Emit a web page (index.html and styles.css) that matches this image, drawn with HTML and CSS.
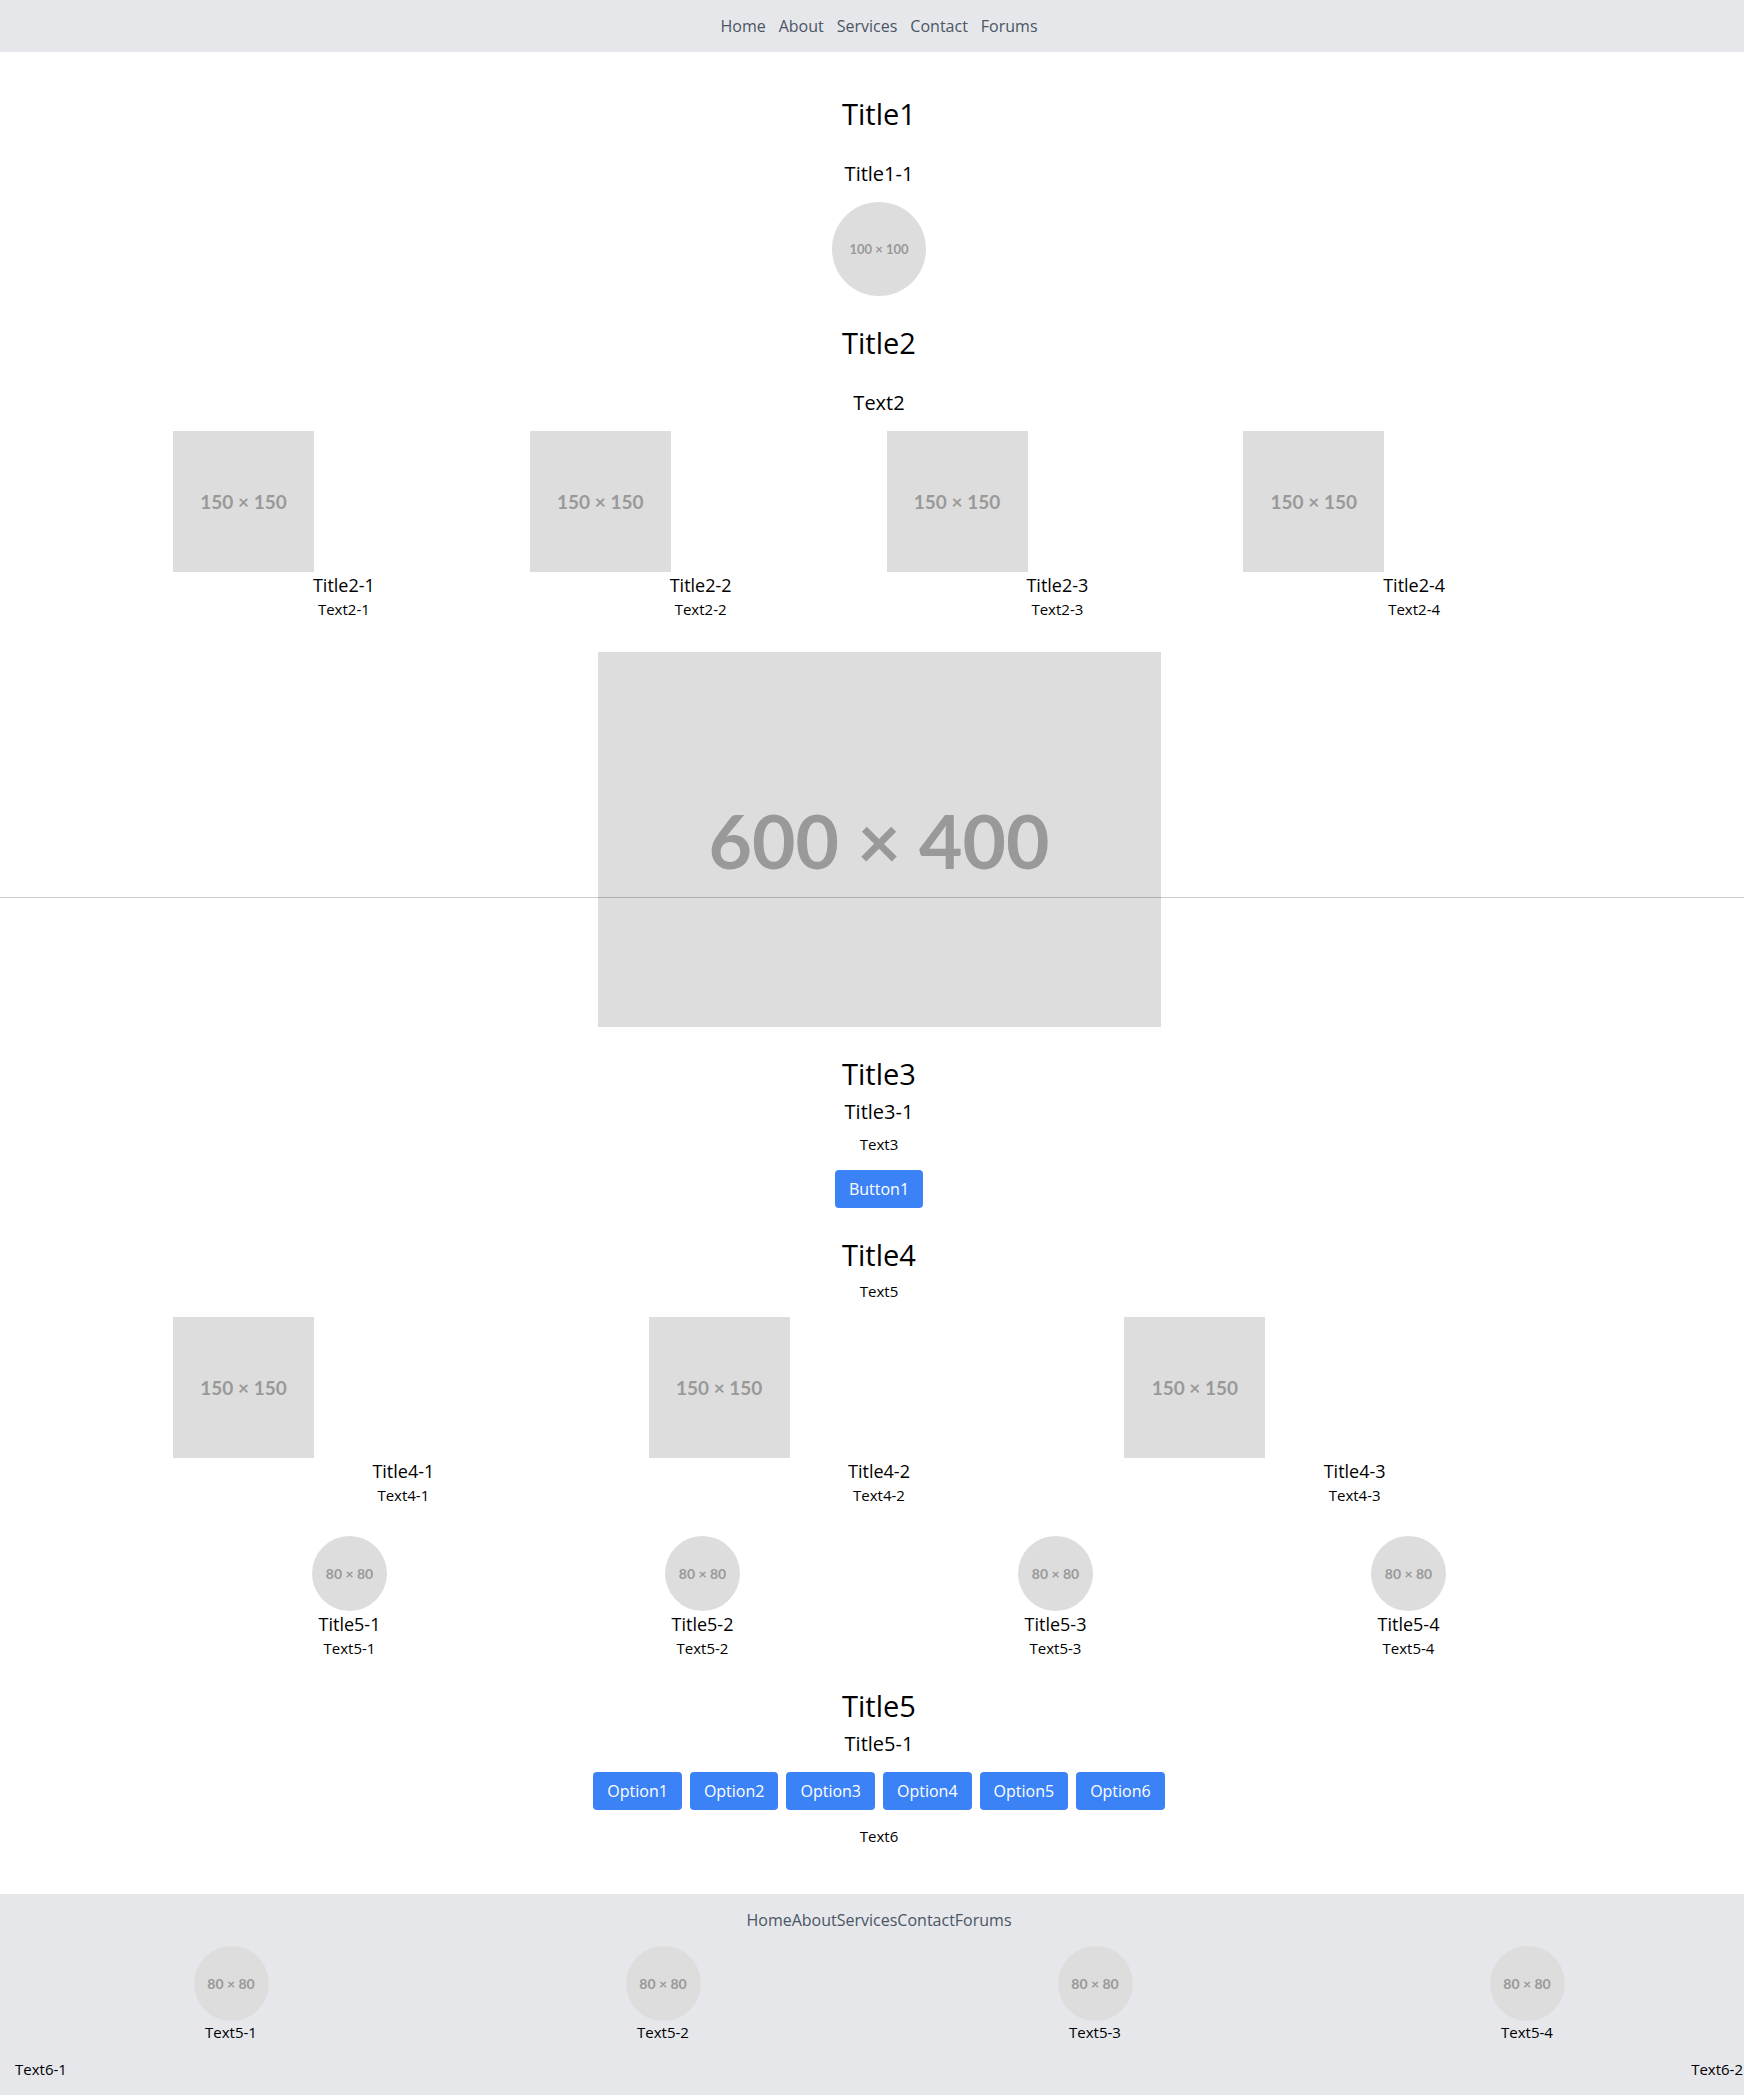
FILE: index.html
```html
<!DOCTYPE html>
<html lang="en">
<head>
  <meta charset="utf-8">
  <meta name="viewport" content="width=device-width, initial-scale=1">
  <title>Home</title>
  <link rel="stylesheet" href="styles.css">
</head>
<body>
  <header class="site-header">
    <nav class="nav nav-spaced" aria-label="Main">
      <a href="#">Home</a>
      <a href="#">About</a>
      <a href="#">Services</a>
      <a href="#">Contact</a>
      <a href="#">Forums</a>
    </nav>
  </header>

  <main class="page">
    <section class="intro">
      <h1 class="title">Title1</h1>
      <div class="stack">
        <p class="subtitle">Title1-1</p>
        <div class="thumb thumb-medium">100 × 100</div>
      </div>
    </section>

    <section class="intro">
      <h2 class="title">Title2</h2>
      <div class="stack">
        <p class="subtitle">Text2</p>
        <div class="container grid grid-four">
          <article class="card"><div class="thumb thumb-square">150 × 150</div><h3 class="card-title">Title2-1</h3><p class="text">Text2-1</p></article>
          <article class="card"><div class="thumb thumb-square">150 × 150</div><h3 class="card-title">Title2-2</h3><p class="text">Text2-2</p></article>
          <article class="card"><div class="thumb thumb-square">150 × 150</div><h3 class="card-title">Title2-3</h3><p class="text">Text2-3</p></article>
          <article class="card"><div class="thumb thumb-square">150 × 150</div><h3 class="card-title">Title2-4</h3><p class="text">Text2-4</p></article>
        </div>
      </div>
    </section>

    <section class="banner">
      <div class="thumb thumb-banner">600 × 400</div>
    </section>

    <section class="stack">
      <div class="heading">
        <h2 class="title">Title3</h2>
        <p class="subtitle">Title3-1</p>
        <p class="text">Text3</p>
      </div>
      <button class="button" type="button">Button1</button>
    </section>

    <section class="stack">
      <div class="heading">
        <h2 class="title">Title4</h2>
        <p class="text">Text5</p>
      </div>
      <div class="container grid grid-three">
        <article class="card"><div class="thumb thumb-square">150 × 150</div><h3 class="card-title">Title4-1</h3><p class="text">Text4-1</p></article>
        <article class="card"><div class="thumb thumb-square">150 × 150</div><h3 class="card-title">Title4-2</h3><p class="text">Text4-2</p></article>
        <article class="card"><div class="thumb thumb-square">150 × 150</div><h3 class="card-title">Title4-3</h3><p class="text">Text4-3</p></article>
      </div>
    </section>

    <section class="container people">
      <article class="person"><div class="thumb thumb-small">80 × 80</div><h3 class="card-title">Title5-1</h3><p class="text">Text5-1</p></article>
      <article class="person"><div class="thumb thumb-small">80 × 80</div><h3 class="card-title">Title5-2</h3><p class="text">Text5-2</p></article>
      <article class="person"><div class="thumb thumb-small">80 × 80</div><h3 class="card-title">Title5-3</h3><p class="text">Text5-3</p></article>
      <article class="person"><div class="thumb thumb-small">80 × 80</div><h3 class="card-title">Title5-4</h3><p class="text">Text5-4</p></article>
    </section>

    <section class="stack">
      <div class="heading">
        <h2 class="title">Title5</h2>
        <p class="subtitle">Title5-1</p>
      </div>
      <div class="options">
        <button class="button" type="button">Option1</button>
        <button class="button" type="button">Option2</button>
        <button class="button" type="button">Option3</button>
        <button class="button" type="button">Option4</button>
        <button class="button" type="button">Option5</button>
        <button class="button" type="button">Option6</button>
      </div>
      <p class="text">Text6</p>
    </section>
  </main>

  <footer class="site-footer">
    <nav class="nav" aria-label="Footer">
      <a href="#">Home</a>
      <a href="#">About</a>
      <a href="#">Services</a>
      <a href="#">Contact</a>
      <a href="#">Forums</a>
    </nav>
    <div class="people">
      <div class="person"><div class="thumb thumb-small">80 × 80</div><p class="text">Text5-1</p></div>
      <div class="person"><div class="thumb thumb-small">80 × 80</div><p class="text">Text5-2</p></div>
      <div class="person"><div class="thumb thumb-small">80 × 80</div><p class="text">Text5-3</p></div>
      <div class="person"><div class="thumb thumb-small">80 × 80</div><p class="text">Text5-4</p></div>
    </div>
    <div class="legal">
      <p class="text">Text6-1</p>
      <p class="text">Text6-2</p>
    </div>
  </footer>
</body>
</html>
```
FILE: styles.css
```css
*,
*::before,
*::after {
  box-sizing: border-box;
}

:root {
  --space: 15px;
  --space-small: 8px;
  --space-large: 30px;
  --bar: #e5e7eb;
}

body {
  margin: 0;
  background: #fff;
  color: #000;
  font-family: "Segoe UI", "Open Sans", "Noto Sans", sans-serif;
  font-size: 15px;
  line-height: 22px;
}

h1,
h2,
h3,
p {
  margin: 0;
  font-weight: 400;
}

.site-header,
.site-footer {
  padding: var(--space) 1px var(--space) var(--space);
  background: var(--bar);
}

.nav {
  display: flex;
  justify-content: center;
  font-size: 16px;
}

.nav-spaced {
  gap: 13px;
}

.nav a {
  color: #4b5563;
  text-decoration: none;
}

.page {
  display: flex;
  flex-direction: column;
  gap: var(--space-large);
  padding: 45px 0 47px;
}

.page > * {
  padding-right: 1px;
  padding-left: var(--space);
}

.intro,
.stack,
.heading,
.person {
  display: flex;
  flex-direction: column;
  align-items: center;
}

.intro {
  gap: var(--space-large);
}

.intro .stack {
  width: 100%;
}

.stack {
  gap: var(--space);
}

.heading {
  gap: var(--space-small);
}

.title {
  font-size: 29px;
  line-height: 34px;
}

.subtitle {
  font-size: 20px;
  line-height: 26px;
}

.card-title {
  font-size: 18px;
  line-height: 26px;
}

.container {
  width: 100%;
  max-width: 1412px;
}

.page > .container {
  align-self: center;
  max-width: 1428px;
}

.grid {
  display: grid;
  gap: var(--space);
}

.grid-four {
  grid-template-columns: repeat(4, 1fr);
}

.grid-three {
  grid-template-columns: repeat(3, 1fr);
}

.card {
  text-align: center;
}

.people {
  display: grid;
  grid-template-columns: repeat(4, 1fr);
}

/* Grey placeholder pictures labelled with their nominal size */
.thumb {
  display: flex;
  align-items: center;
  justify-content: center;
  background: #ddd;
  color: #999;
  font-family: Lato, sans-serif;
  font-weight: 700;
}

.thumb-small {
  width: 75px;
  height: 75px;
  border-radius: 50%;
  font-size: 14px;
}

.thumb-medium {
  width: 94px;
  height: 94px;
  border-radius: 50%;
  font-size: 13px;
}

.thumb-square {
  width: 141px;
  height: 141px;
  font-size: 19px;
}

.thumb-banner {
  width: 563px;
  height: 375px;
  font-size: 75px;
}

.banner {
  position: relative;
  display: flex;
  justify-content: center;
  margin-top: 2px;
}

/* Hairline that crosses the banner from edge to edge */
.banner::after {
  content: "";
  position: absolute;
  top: 245px;
  right: 0;
  left: 0;
  height: 1px;
  background: rgba(0, 0, 0, 0.2);
}

.button {
  height: 38px;
  padding: 0 14px;
  border: 0;
  border-radius: 4px;
  background: #3b82f6;
  color: #fff;
  font: inherit;
  font-size: 16px;
  cursor: pointer;
}

.options {
  display: flex;
  flex-wrap: wrap;
  justify-content: center;
  gap: var(--space-small);
}

.site-footer {
  display: flex;
  flex-direction: column;
  gap: var(--space);
}

.legal {
  display: flex;
  justify-content: space-between;
}
```
